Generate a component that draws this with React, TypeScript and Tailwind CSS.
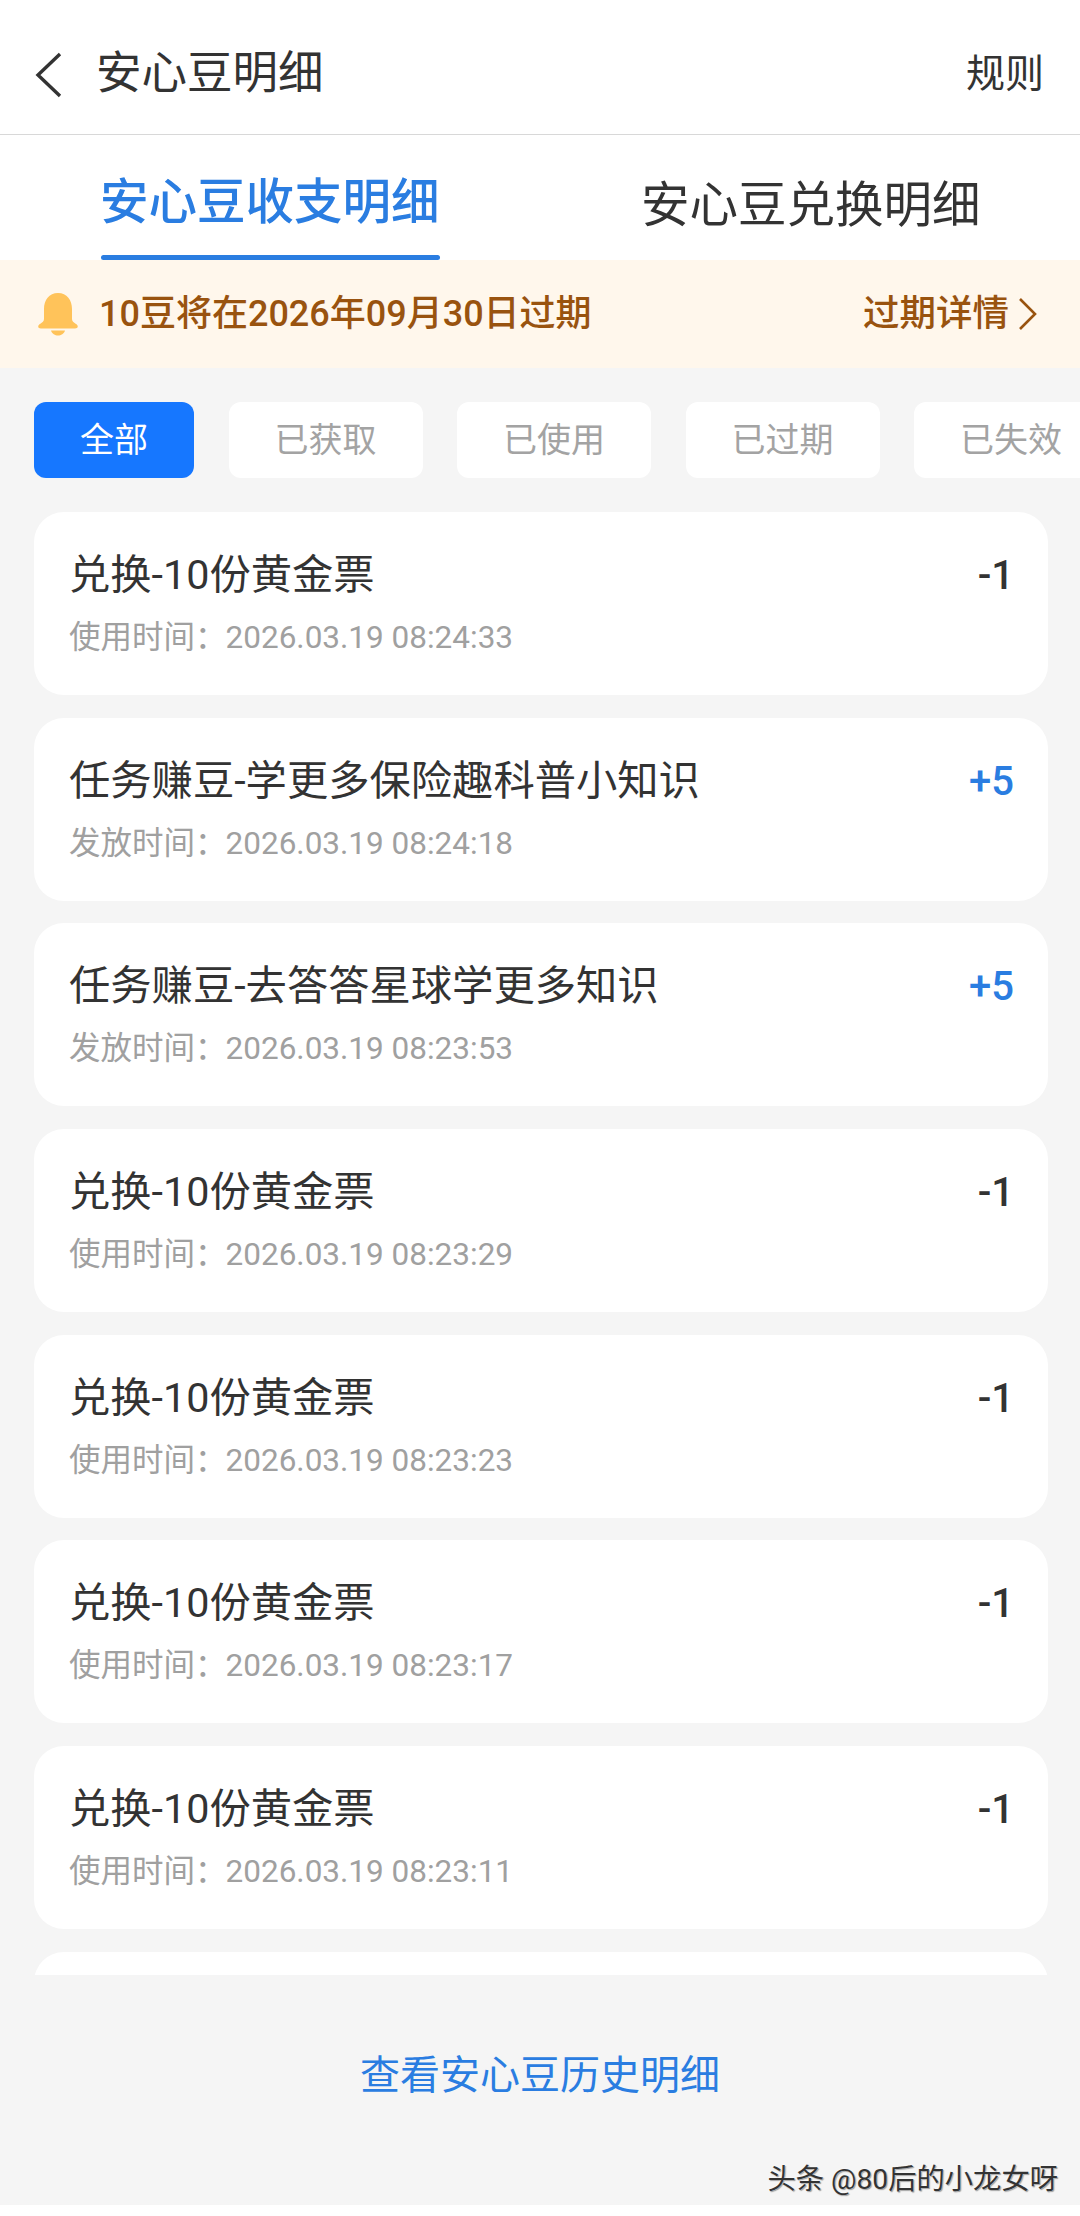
const chips = ['全部', '已获取', '已使用', '已过期', '已失效'];

const records = [
  { title: '兑换-10份黄金票', label: '使用时间', time: '2026.03.19 08:24:33', value: '-1' },
  { title: '任务赚豆-学更多保险趣科普小知识', label: '发放时间', time: '2026.03.19 08:24:18', value: '+5' },
  { title: '任务赚豆-去答答星球学更多知识', label: '发放时间', time: '2026.03.19 08:23:53', value: '+5' },
  { title: '兑换-10份黄金票', label: '使用时间', time: '2026.03.19 08:23:29', value: '-1' },
  { title: '兑换-10份黄金票', label: '使用时间', time: '2026.03.19 08:23:23', value: '-1' },
  { title: '兑换-10份黄金票', label: '使用时间', time: '2026.03.19 08:23:17', value: '-1' },
  { title: '兑换-10份黄金票', label: '使用时间', time: '2026.03.19 08:23:11', value: '-1' },
];

export default function App() {
  return (
    <div className="w-[1080px] h-[2216px] flex flex-col overflow-hidden bg-[#f5f5f5] font-['Roboto','Noto_Sans_CJK_SC',sans-serif]">
      {/* Header */}
      <div className="h-[135px] shrink-0 flex items-center bg-white border-b border-[#d8d8d8] pl-[34px] pr-[36px] pt-[15px]">
        <svg viewBox="0 0 28 46" className="w-[28px] h-[46px]" fill="none" stroke="#333" strokeWidth="3.4">
          <path d="M26 2 L4 23 L26 44" />
        </svg>
        <span className="ml-[34px] text-[45.500px] text-[#333]">安心豆明细</span>
        <span className="ml-auto text-[39px] text-[#333]">规则</span>
      </div>

      {/* Tabs */}
      <div className="h-[125px] shrink-0 flex bg-white pl-[101px]">
        <div className="w-[339px] flex flex-col items-stretch">
          <div className="flex-1 flex items-center pt-[16px] -ml-[1px] text-[48.500px] font-medium text-[#2a7de1] whitespace-nowrap">
            安心豆收支明细
          </div>
          <div className="h-[5px] rounded-full bg-[#2a7de1]" />
        </div>
        <div className="ml-[201px] pt-[18px] flex items-center text-[48.500px] text-[#333] whitespace-nowrap">
          安心豆兑换明细
        </div>
      </div>

      {/* Expiry notice */}
      <div className="h-[108px] shrink-0 flex items-center bg-[#fff7ec] pl-[37px] pr-[42px]">
        <svg viewBox="0 0 42 44" className="w-[42px] h-[44px]" fill="#ffc35a">
          <path d="M21 1C12 1 7 8 7 17v10c0 2-1.500 3.500-4 5-2.500 1.500-2.500 4.500 1 4.500h34c3.500 0 3.500-3 1-4.500-2.500-1.500-4-3-4-5V17C35 8 30 1 21 1z" />
          <path d="M14 38.500h14c-1 3.500-4 5-7 5s-6-1.500-7-5z" />
        </svg>
        <span className="ml-[20px] text-[36px] font-medium text-[#99530f] whitespace-nowrap">
          10豆将在2026年09月30日过期
        </span>
        <span className="ml-auto text-[36.500px] font-medium text-[#99530f]">过期详情</span>
        <svg viewBox="0 0 20 34" className="ml-[9px] w-[20px] h-[34px]" fill="none" stroke="#99530f" strokeWidth="2.600">
          <path d="M2 2 L17 17 L2 32" />
        </svg>
      </div>

      {/* Filter chips */}
      <div className="h-[34px] shrink-0" />
      <div className="h-[76px] shrink-0 flex gap-[34.500px] pl-[34px] overflow-hidden">
        {chips.map((chip, i) => (
          <div
            key={chip}
            className={
              i === 0
                ? 'w-[160px] shrink-0 flex items-center justify-center rounded-[12px] bg-[#1677ff] text-[34px] text-white'
                : 'w-[194px] shrink-0 flex items-center justify-center rounded-[12px] bg-white text-[34px] text-[#a3a3a3]'
            }
          >
            {chip}
          </div>
        ))}
      </div>

      {/* Records */}
      <div className="h-[1463px] shrink-0 mt-[34px] pl-[34px] pr-[32px] flex flex-col gap-[22.700px] overflow-hidden">
        {records.map((r, i) => (
          <div key={i} className="h-[183px] shrink-0 rounded-[30px] bg-white pl-[35px] pr-[34px] pt-[40px]">
            <div className="flex items-center justify-between h-[48px]">
              <span className="text-[41.300px] text-[#333]">{r.title}</span>
              <span className={r.value.startsWith('+') ? 'text-[40px] font-medium text-[#2a7de1]' : 'text-[40px] font-medium text-[#333]'}>
                {r.value}
              </span>
            </div>
            <div className="mt-[16px] text-[31.500px] leading-[44px] text-[#a0a0a0] whitespace-nowrap">
              <span className="-mr-[1px]">{r.label}：</span>
              {r.time}
            </div>
          </div>
        ))}
        <div className="h-[183px] shrink-0 rounded-[30px] bg-white" />
      </div>

      {/* Footer */}
      <div className="relative flex-1 flex items-center justify-center pb-[28px] text-[40px] text-[#2a7de1]">
        查看安心豆历史明细
        <span className="absolute right-[22px] bottom-[4px] text-[28.300px] text-[#333] [text-shadow:0_0_2px_#fff,1px_1px_1px_#888]">
          头条 @80后的小龙女呀
        </span>
      </div>
      <div className="h-[11px] shrink-0 bg-white" />
    </div>
  );
}
